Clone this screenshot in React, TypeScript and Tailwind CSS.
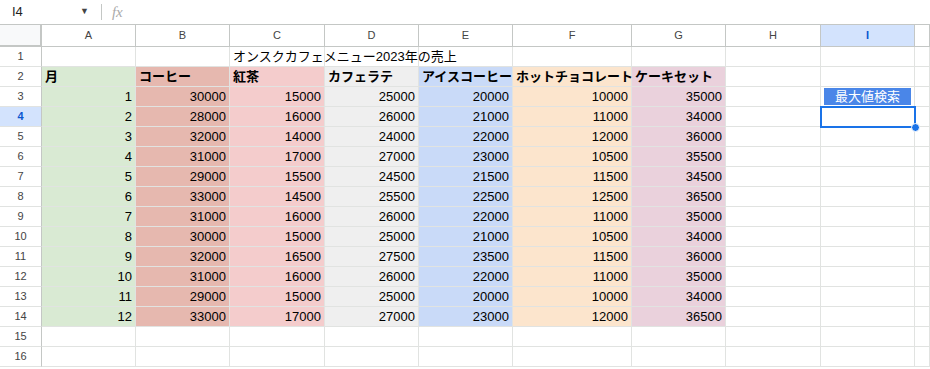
import React from 'react';

const cols = ['A', 'B', 'C', 'D', 'E', 'F', 'G', 'H', 'I', ''];
const heads = ['月', 'コーヒー', '紅茶', 'カフェラテ', 'アイスコーヒー', 'ホットチョコレート', 'ケーキセット'];
const fills = ['bg-[#d9ead3]', 'bg-[#e6b8af]', 'bg-[#f4cccc]', 'bg-[#efefef]', 'bg-[#c9daf8]', 'bg-[#fce5cd]', 'bg-[#ead1dc]'];

const data = [
  [1, 30000, 15000, 25000, 20000, 10000, 35000],
  [2, 28000, 16000, 26000, 21000, 11000, 34000],
  [3, 32000, 14000, 24000, 22000, 12000, 36000],
  [4, 31000, 17000, 27000, 23000, 10500, 35500],
  [5, 29000, 15500, 24500, 21500, 11500, 34500],
  [6, 33000, 14500, 25500, 22500, 12500, 36500],
  [7, 31000, 16000, 26000, 22000, 11000, 35000],
  [8, 30000, 15000, 25000, 21000, 10500, 34000],
  [9, 32000, 16500, 27500, 23500, 11500, 36000],
  [10, 31000, 16000, 26000, 22000, 11000, 35000],
  [11, 29000, 15000, 25000, 20000, 10000, 34000],
  [12, 33000, 17000, 27000, 23000, 12000, 36500],
];

const grid = 'grid grid-cols-[42px_94px_94px_95px_94px_94px_119px_94px_95px_94px_1fr]';
const font = "font-['Liberation_Sans','Noto_Sans_CJK_JP',sans-serif]";

const RowHead: React.FC<{ n: number; active?: boolean }> = ({ n, active }) => (
  <div
    className={`h-5 flex items-center justify-center text-[11px] border-r border-r-[#c4c7c5] border-b border-b-[#e1e3e1] ${
      active ? 'bg-[#d3e3fd] text-[#0b57d0] font-bold' : 'bg-white text-[#444]'
    }`}
  >
    {n}
  </div>
);

const Cell: React.FC<{ className?: string; children?: React.ReactNode }> = ({ className = '', children }) => (
  <div className={`h-5 px-[3px] flex items-center text-[13px] text-black border-r border-b border-[#e1e3e1] whitespace-nowrap ${className}`}>
    {children}
  </div>
);

const App: React.FC = () => {
  return (
    <div className={`w-[930px] h-[369px] overflow-hidden bg-white ${font}`}>
      <div className="h-6 flex items-center text-[13px] text-[#1f1f1f]">
        <span className="ml-[12px] w-[68px]">I4</span>
        <span className="text-[9px] text-[#444]">▼</span>
        <span className="ml-[12px] h-4 w-px bg-[#c4c7c5]" />
        <span className="ml-[10px] italic font-['Liberation_Serif',serif] text-[#aaa] text-[15px]">fx</span>
      </div>
      <div className={`${grid} border-t border-[#c4c7c5]`}>
        <div className="h-[22px] bg-[#f8f9fa] border-r-2 border-b-2 border-[#c4c7c5]" />
        {cols.map((c, i) => (
          <div
            key={i}
            className={`h-[22px] flex items-center justify-center text-[11px] border-r border-b border-[#c4c7c5] ${
              c === 'I' ? 'bg-[#d3e3fd] text-[#0b57d0] font-bold' : 'bg-white text-[#444]'
            }`}
          >
            {c}
          </div>
        ))}

        <RowHead n={1} />
        <Cell />
        <Cell />
        <Cell className="overflow-visible relative z-10">オンスクカフェメニュー2023年の売上</Cell>
        <Cell />
        <Cell />
        <Cell />
        <Cell />
        <Cell />
        <Cell />
        <Cell />

        <RowHead n={2} />
        {heads.map((h, i) => (
          <Cell key={i} className={`${fills[i]} font-bold`}>
            {h}
          </Cell>
        ))}
        <Cell />
        <Cell />
        <Cell />

        {data.map((row, r) => (
          <React.Fragment key={r}>
            <RowHead n={r + 3} active={r === 1} />
            {row.map((v, i) => (
              <Cell key={i} className={`${fills[i]} justify-end`}>
                {v}
              </Cell>
            ))}
            <Cell />
            {r === 0 ? (
              <Cell className="px-[2px] py-[1px]">
                <div className="w-full h-full bg-[#4a86e8] text-white text-[13px] flex items-center justify-center">
                  最大値検索
                </div>
              </Cell>
            ) : r === 1 ? (
              <Cell className="relative !border-0 outline-2 outline-[#1a73e8] -outline-offset-1">
                <span className="absolute -right-[5px] -bottom-[5px] w-[9px] h-[9px] rounded-full bg-[#1a73e8] border border-white" />
              </Cell>
            ) : (
              <Cell />
            )}
            <Cell />
          </React.Fragment>
        ))}

        {[15, 16].map((n) => (
          <React.Fragment key={n}>
            <RowHead n={n} />
            {cols.map((_, i) => (
              <Cell key={i} />
            ))}
          </React.Fragment>
        ))}
      </div>
    </div>
  );
};

export default App;
